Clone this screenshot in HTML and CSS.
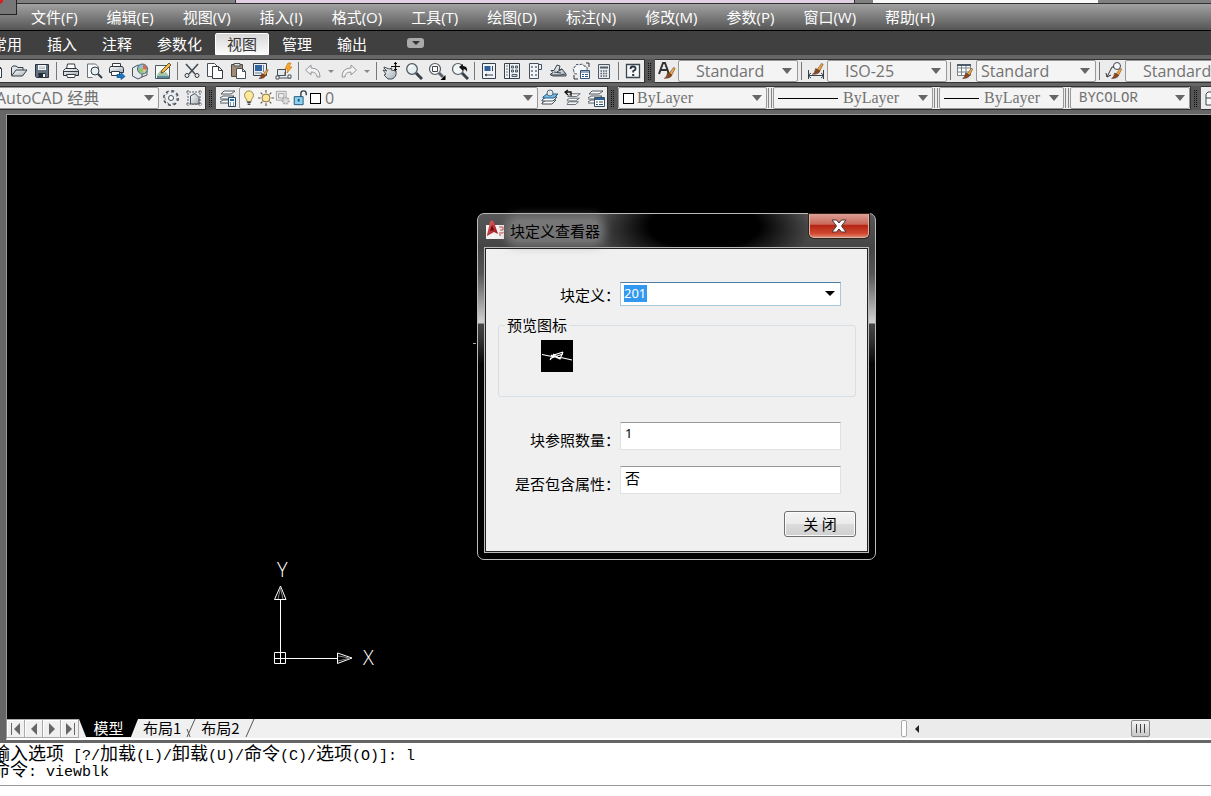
FILE: index.html
```html
<!DOCTYPE html>
<html lang="zh-CN">
<head>
<meta charset="utf-8">
<title>AutoCAD 经典</title>
<link rel="stylesheet" href="styles.css">
</head>
<body>
<svg class="sprite" aria-hidden="true">
  <defs>
    <linearGradient id="g-metal" x1="0" y1="0" x2="1" y2="1"><stop offset="0" stop-color="#fff"/><stop offset="1" stop-color="#a4adb5"/></linearGradient>
    <linearGradient id="g-red" x1="0" y1="0" x2="1" y2="1"><stop offset="0" stop-color="#f26a66"/><stop offset="1" stop-color="#8e0a10"/></linearGradient>
  </defs>
  <symbol id="i-new" viewBox="0 0 18 18"><path d="M3.500 2.500h7l4 4v9h-11z M10.500 2.500v4h4" fill="#fff" stroke="#333b45"/></symbol>
  <symbol id="i-open" viewBox="0 0 18 18"><path d="M1.500 13V5.500L3 4h3l2 1.500h5V8" fill="#dfe4e8" stroke="#333b45"/><path d="M1.500 14L6 8h11l-4.500 6z" fill="url(#g-metal)" stroke="#333b45"/></symbol>
  <symbol id="i-save" viewBox="0 0 18 18"><path d="M2.500 2.500h13v13h-12l-1-1z" fill="#637080" stroke="#2b333d"/><path d="M5 3h8v5H5z" fill="#f4f6f8"/><path d="M5.500 11h7v4h-7z" fill="#222a33"/><path d="M10 12h2v3h-2z" fill="#eee"/><path d="M6 5h6M6 6.500h6" stroke="#98a3ad" stroke-width=".7"/></symbol>
  <symbol id="i-print" viewBox="0 0 18 18"><path d="M4.500 7l1-5h7l1 5" fill="#fff" stroke="#333b45"/><path d="M3.500 6.500h11l2 2v5h-15v-5z" fill="url(#g-metal)" stroke="#2c343e"/><path d="M1.500 9.500h15" stroke="#333b45"/><path d="M4.500 12.500h9l-1 3h-7z" fill="#fff" stroke="#333b45"/></symbol>
  <symbol id="i-preview" viewBox="0 0 18 18"><path d="M13.500 7V5l-3-3h-8v13.500h5" fill="#fafafa" stroke="#6a737d"/><circle cx="10" cy="9" r="4" fill="#e7f0f5" stroke="#333b45"/><path d="M13 12l4 4" stroke="#333b45" stroke-width="2"/></symbol>
  <symbol id="i-publish" viewBox="0 0 18 18"><path d="M4.500 4V1.500h8V4" fill="#fff" stroke="#333b45"/><path d="M2.500 4.500h12l1 2v4h-14v-4z" fill="url(#g-metal)" stroke="#2c343e"/><path d="M3.500 9.500h8v4h-8z" fill="#fff" stroke="#333b45"/><path d="M9 12.500h4v-2l4 4-4 3v-2H9z" fill="#1878c8" stroke="#064986" stroke-width=".7"/></symbol>
  <symbol id="i-model" viewBox="0 0 18 18"><path d="M1.500 6L7 3l4 2v10l-4 2-5.500-3z" fill="#e5e9ed" stroke="#47515c"/><path d="M11 15l5-2V9" fill="none" stroke="#47515c"/><circle cx="11.500" cy="7" r="5" fill="#8dc3d8" stroke="#49636f"/><path d="M12 2.500q4 1 4 4.500l-4 1z" fill="#dd674b"/><path d="M8 6l4 1-1 5q-4-1-3-6z" fill="#9bc05a"/><path d="M12 7l3 1-2 3z" fill="#f1d357"/></symbol>
  <symbol id="i-sheet" viewBox="0 0 18 18"><path d="M1.500 3.500h14v13h-14z" fill="#f6faf7" stroke="#4c5963"/><path d="M3 13l4-5 3 3 2-1 3 4v2H3z" fill="#a2c7a8"/><path d="M3 15h12" stroke="#5a8a99" stroke-width="2"/><path d="M7 11l1-3 7-7 2 2-7 7z" fill="#f0bd4d" stroke="#765427"/></symbol>
  <symbol id="i-cut" viewBox="0 0 18 18"><path d="M3 2l9 10M15 2L6 12" stroke="#444c55" stroke-width="1.600"/><circle cx="4" cy="13.500" r="2" fill="#eee" stroke="#2b333c"/><circle cx="14" cy="13.500" r="2" fill="#eee" stroke="#2b333c"/></symbol>
  <symbol id="i-copy" viewBox="0 0 18 18"><path d="M7 14.500H1.500v-13h7L11 4" fill="#fff" stroke="#46505b"/><path d="M6.500 4.500h6l4 4v8h-10z M12.500 4.500v4h4" fill="#fff" stroke="#333b45"/></symbol>
  <symbol id="i-paste" viewBox="0 0 18 18"><path d="M2.500 2.500h11v12h-11z" fill="#a08c72" stroke="#4d4840"/><path d="M5 1.500h6V4H5z" fill="#dde1e4" stroke="#555"/><path d="M7.500 6.500h6l3 3v7h-9z M13.500 6.500v3h3" fill="#fff" stroke="#46505b"/></symbol>
  <symbol id="i-brush" viewBox="0 0 18 18"><path d="M10 10l5-7 2 1-4 8z" fill="#f0a642" stroke="#6b4522" stroke-width=".7"/><path d="M8 9l5 3q-1 4-9 4 3-1 4-7z" fill="#8c4722" stroke="#4c2612" stroke-width=".7"/></symbol>
  <symbol id="i-match" viewBox="0 0 18 18"><path d="M1.500 1.500h13v12h-13z" fill="#e8eef3" stroke="#35414e"/><path d="M3 3h7v6H3z" fill="#31659f"/><path d="M11.500 3v7M3 11h7" stroke="#73808d"/><use href="#i-brush" x="3" y="5" width="15" height="13"/></symbol>
  <symbol id="i-block" viewBox="0 0 18 18"><path d="M2.500 7.500h8v6h-8z" fill="#e6e9ec" stroke="#46505b"/><path d="M1 16h15M10 13v-3" stroke="#46505b"/><path d="M1 14h3v3H1zM13 13h3v3h-3z" fill="#fff" stroke="#46505b"/><path d="M13 1l-3 6h3l-1 4 5-6h-3l2-4z" fill="#ffad20" stroke="#bd6a0c" stroke-width=".6"/></symbol>
  <symbol id="i-undo" viewBox="0 0 18 18"><path d="M1.500 8L7 3v3q9 0 9 9h-3q0-5-6-5v3z" fill="#f2f2f2" stroke="#93979b"/></symbol>
  <symbol id="i-redo" viewBox="0 0 18 18"><path d="M16.500 8L11 3v3q-9 0-9 9h3q0-5 6-5v3z" fill="#f2f2f2" stroke="#93979b"/></symbol>
  <symbol id="i-pan" viewBox="0 0 18 18"><path d="M2 5l5 2 3-1-1 2 5 1q1 6-4 8H6l-4-4 2-1-3-4 4 1-3-3z" fill="url(#g-metal)" stroke="#434c55"/><path d="M13.500 0v9M9 4.500h9M12 1.500h3M12 7.500h3" stroke="#111" stroke-width="1.200"/></symbol>
  <symbol id="i-zoom" viewBox="0 0 18 18"><path d="M11 11l6 6" stroke="#3a4148" stroke-width="3"/><circle cx="7" cy="7" r="5.300" fill="#e5f0f2" stroke="#515a62" stroke-width="1.300"/><path d="M4 6q1-3 4-2" stroke="#fff" stroke-width="1.500" fill="none"/></symbol>
  <symbol id="i-zoomwin" viewBox="0 0 18 18"><path d="M11 11l4 4" stroke="#59616a" stroke-width="3"/><circle cx="7" cy="7" r="5.500" fill="#f4f8f9" stroke="#515a62" stroke-width="1.200"/><path d="M4.500 4.500h5v5h-5z" fill="#fff" stroke="#444"/><path d="M17.500 13v5h-5z" fill="#000"/></symbol>
  <symbol id="i-zoomprev" viewBox="0 0 18 18"><path d="M11 11l6 6" stroke="#3a4148" stroke-width="3"/><circle cx="7" cy="7" r="5.500" fill="#f1f6f7" stroke="#515a62" stroke-width="1.200"/><path d="M8 5l4-3v2q5 0 4 6-1-3-4-3v2z" fill="#111"/></symbol>
  <symbol id="i-props" viewBox="0 0 18 18"><path d="M2.500 1.500h13v15h-13z" fill="#f1f4f6" stroke="#36414c"/><path d="M4.500 4h6v5h-6z" fill="#315f9e"/><path d="M12.500 4v5M5 13h8M5 13l2-1M5 13l2 1" stroke="#36414c"/></symbol>
  <symbol id="i-center" viewBox="0 0 18 18"><path d="M1.500 1.500h15v15h-15zM6.500 2v14" fill="#f1f4f6" stroke="#36414c"/><path d="M3 4h2M3 7h2M3 10h2M3 13h2" stroke="#687580"/><path d="M8.500 4h2v2h-2zM12.500 4h2v2h-2zM8.500 8h2v2h-2zM12.500 8h2v2h-2zM9 12.500h5v2H9z" fill="#cfd8df" stroke="#4d5a66"/></symbol>
  <symbol id="i-palette" viewBox="0 0 18 18"><path d="M3.500 1.500h9v15h-9zM12.500 2.500h3v5h-3" fill="#f1f4f6" stroke="#47525d"/><path d="M5 4h2v2H5zM9 4h2v2H9zM5 8h2v2H5zM9 8h2v2H9zM5 12h2v2H5zM9 12h2v2H9z" fill="#84909a"/></symbol>
  <symbol id="i-sheetset" viewBox="0 0 18 18"><path d="M1 12.500l3-2-2-2h3L8 3l3 1-1 4 3-1 4 5v2H4z" fill="url(#g-metal)" stroke="#39444e"/><path d="M2 13h10l4-1M8 10l5-3M5 10l7 1" stroke="#39444e" fill="none"/></symbol>
  <symbol id="i-markup" viewBox="0 0 18 18"><path d="M5 12q-4 0-3-3-2-3 1-4 1-4 4-2 4-2 5 1 4 0 3 4" fill="#f4f6f7" stroke="#47525d" stroke-dasharray="3 1"/><path d="M2 13v4h4M14 1h3v4" fill="none" stroke="#333"/><path d="M8.500 8.500h9v8h-9z" fill="#fff" stroke="#32547b"/><path d="M9 10h8M10 12.500h2M13 12.500h3M10 14.500h2M13 14.500h3" stroke="#32547b"/></symbol>
  <symbol id="i-calc" viewBox="0 0 18 18"><path d="M3.500 2.500h11v14h-11z" fill="#e7ebee" stroke="#4e5963"/><path d="M5 4.500h8v2H5z" fill="#505b66"/><path d="M5.500 9h7M5.500 11.500h7M5.500 14h7" stroke="#55606b" stroke-width="1.500" stroke-dasharray="1.500 1"/></symbol>
  <symbol id="i-help" viewBox="0 0 18 18"><path d="M2.500 2.500h13v13h-13z" fill="#f8f8f8" stroke="#384552" stroke-width="1.300"/><path d="M6.500 7q0-2.500 2.500-2.500 3 0 2.500 2.500-.2 1.200-2.300 2v1.500" fill="none" stroke="#253340" stroke-width="1.800"/><path d="M8.200 12h2v2h-2z" fill="#253340"/></symbol>
  <symbol id="i-textstyle" viewBox="0 0 18 18"><path d="M1 12L5 1h2l4 11M3 8h7" fill="none" stroke="#333" stroke-width="2"/><use href="#i-brush" x="2" y="3" width="17" height="15"/></symbol>
  <symbol id="i-dimstyle" viewBox="0 0 18 18"><path d="M1.500 8v9M16.500 8v9M2 13.500h14M4 11l-3 2.500L4 16M14 11l3 2.500-3 2.500" fill="none" stroke="#36414c"/><use href="#i-brush" x="1" y="-1" width="17" height="15"/></symbol>
  <symbol id="i-tablestyle" viewBox="0 0 18 18"><path d="M1.500 2.500h13v11h-13zM2 6h12M2 10h12M5.500 3v10M10 3v10" fill="#fff" stroke="#76808a"/><path d="M1 2h14v2H1z" fill="#4e5b68"/><use href="#i-brush" x="3" y="4" width="15" height="14"/></symbol>
  <symbol id="i-leader" viewBox="0 0 18 18"><circle cx="12" cy="4" r="3.500" fill="#f5f7f8" stroke="#3f4a55"/><path d="M9 5H7L2 15M1 11l1 4 4-2" fill="none" stroke="#333"/><use href="#i-brush" x="3" y="4" width="15" height="14"/></symbol>
  <symbol id="i-gear" viewBox="0 0 18 18"><circle cx="9" cy="9" r="7" fill="none" stroke="#444e58" stroke-width="2" stroke-dasharray="3 2.500"/><circle cx="9" cy="9" r="6.500" fill="#eceff1"/><circle cx="9" cy="9" r="6" fill="none" stroke="#68727b" stroke-dasharray="2.500 3"/><circle cx="9" cy="9" r="2.500" fill="#fff" stroke="#444e58"/></symbol>
  <symbol id="i-workspace" viewBox="0 0 18 18"><path d="M3 1v16M15 1v16M1 3h16M1 15h16" stroke="#58636e" stroke-dasharray="2 1"/><path d="M5.500 15V7L10 4.500l4 4V15z" fill="url(#g-metal)" stroke="#44505b"/></symbol>
  <symbol id="i-layers" viewBox="0 0 18 18"><path d="M2 5l3-3h11l-4 3zM1 9l3-2h11l-4 3H1M1 13l3-2h10l-3 3H1" fill="#fafafa" stroke="#505a64"/></symbol>
  <symbol id="i-layerprops" viewBox="0 0 18 18"><use href="#i-layers" width="18" height="18"/><path d="M9.500 8.500h7v9h-7z" fill="#f4f8fc" stroke="#23435f"/><path d="M11 10h4v2h-4z" fill="#2670aa"/><path d="M11 14h1M14 14h1M11 16h1M14 16h1" stroke="#23435f"/></symbol>
  <symbol id="i-layercur" viewBox="0 0 18 18"><path d="M1 14l4-3h10l-4 4H1z" fill="#fff" stroke="#3c4c58"/><path d="M1 11l4-3h11l-4 4H1z" fill="#fff" stroke="#3c4c58"/><path d="M2 8l4-3h11l-4 4H2z" fill="#79bbe6" stroke="#1c5c90"/><circle cx="9" cy="4" r="3" fill="#e4ebee" stroke="#566a78"/></symbol>
  <symbol id="i-layerprev" viewBox="0 0 18 18"><use href="#i-layers" x="2" y="3" width="16" height="16"/><path d="M1 3h6v4M4 1L1 3l3 3" fill="none" stroke="#111" stroke-width="1.300"/></symbol>
  <symbol id="i-layerstate" viewBox="0 0 18 18"><use href="#i-layers" width="18" height="18"/><path d="M7.500 8.500h10v9h-10z" fill="#fff" stroke="#344f68"/><path d="M8 10h9" stroke="#2f6292" stroke-width="2"/><path d="M9 13h2M12 13h4M9 15.500h2M12 15.500h4" stroke="#344f68"/></symbol>
  <symbol id="i-bulb" viewBox="0 0 18 18"><path d="M6.500 11Q4 8.500 4 6a5 5 0 0 1 10 0q0 2.500-2.500 5v2h-5z" fill="#ffe89a" stroke="#8c7840"/><path d="M7 14h4M7.500 16h3" stroke="#3e4a55" stroke-width="1.500"/></symbol>
  <symbol id="i-sun" viewBox="0 0 18 18"><path d="M9 0v3M9 15v3M0 9h3M15 9h3M3 3l2 2M13 13l2 2M3 15l2-2M13 5l2-2" stroke="#665630" stroke-width="1.300"/><circle cx="9" cy="9" r="4.500" fill="#ffe799" stroke="#77683c"/></symbol>
  <symbol id="i-vpfreeze" viewBox="0 0 18 18"><path d="M1.500 1.500h11v10h-11zM4 4h6v5H4z" fill="#eee" stroke="#999"/><circle cx="12" cy="12" r="3.500" fill="#ddd" stroke="#aaa" stroke-width="2" stroke-dasharray="2 1"/></symbol>
  <symbol id="i-unlock" viewBox="0 0 18 18"><path d="M10 8V4q0-3 3-3t3 3v2" fill="none" stroke="#32424f" stroke-width="1.600"/><path d="M2.500 7.500h10v9h-10z" fill="#8ed2f2" stroke="#144b6b"/><path d="M7.500 10v3" stroke="#144b6b" stroke-width="2"/></symbol>
  <symbol id="i-grid" viewBox="0 0 18 18"><path d="M4 3h12v13H2V5zM2 9h14M8 3v13" fill="#f8fafb" stroke="#3a4650"/></symbol>
</svg>

<div class="app">
  <div class="titlestrip" aria-hidden="true"><span class="logo-corner"><svg width="16" height="14" viewBox="0 0 16 14"><path d="M0 0h3v2L0 4z" fill="#d81c20"/></svg></span><span class="strip-pink"></span><span class="strip-white"></span></div>

  <nav class="menubar" aria-label="菜单">
    <button>文件(F)</button><button>编辑(E)</button><button>视图(V)</button><button>插入(I)</button><button>格式(O)</button><button>工具(T)</button><button>绘图(D)</button><button>标注(N)</button><button>修改(M)</button><button>参数(P)</button><button>窗口(W)</button><button>帮助(H)</button>
  </nav>

  <nav class="ribbon" aria-label="功能区">
    <button>常用</button><button>插入</button><button>注释</button><button>参数化</button><button class="current">视图</button><button>管理</button><button>输出</button>
    <button class="ribbon-more" aria-label="更多"><span class="tri"></span></button>
  </nav>

  <div class="toolbars">
    <div class="toolrow">
      <div class="bar bar-standard">
        <button class="tool" aria-label="新建"><svg><use href="#i-new"/></svg></button>
        <button class="tool" aria-label="打开"><svg><use href="#i-open"/></svg></button>
        <button class="tool" aria-label="保存"><svg><use href="#i-save"/></svg></button>
        <i class="sep"></i>
        <button class="tool" aria-label="打印"><svg><use href="#i-print"/></svg></button>
        <button class="tool" aria-label="打印预览"><svg><use href="#i-preview"/></svg></button>
        <button class="tool" aria-label="发布"><svg><use href="#i-publish"/></svg></button>
        <button class="tool" aria-label="三维"><svg><use href="#i-model"/></svg></button>
        <button class="tool" aria-label="图纸"><svg><use href="#i-sheet"/></svg></button>
        <i class="sep"></i>
        <button class="tool" aria-label="剪切"><svg><use href="#i-cut"/></svg></button>
        <button class="tool" aria-label="复制"><svg><use href="#i-copy"/></svg></button>
        <button class="tool" aria-label="粘贴"><svg><use href="#i-paste"/></svg></button>
        <button class="tool" aria-label="特性匹配"><svg><use href="#i-match"/></svg></button>
        <button class="tool" aria-label="块编辑器"><svg><use href="#i-block"/></svg></button>
        <i class="sep"></i>
        <button class="tool" aria-label="放弃"><svg><use href="#i-undo"/></svg></button>
        <button class="tool drop" aria-label="放弃列表"><span class="tri"></span></button>
        <button class="tool" aria-label="重做"><svg><use href="#i-redo"/></svg></button>
        <button class="tool drop" aria-label="重做列表"><span class="tri"></span></button>
        <i class="sep"></i>
        <button class="tool" aria-label="平移"><svg><use href="#i-pan"/></svg></button>
        <button class="tool" aria-label="缩放"><svg><use href="#i-zoom"/></svg></button>
        <button class="tool" aria-label="窗口缩放"><svg><use href="#i-zoomwin"/></svg></button>
        <button class="tool" aria-label="上一个缩放"><svg><use href="#i-zoomprev"/></svg></button>
        <i class="sep"></i>
        <button class="tool" aria-label="特性"><svg><use href="#i-props"/></svg></button>
        <button class="tool" aria-label="设计中心"><svg><use href="#i-center"/></svg></button>
        <button class="tool" aria-label="工具选项板"><svg><use href="#i-palette"/></svg></button>
        <button class="tool" aria-label="图纸集"><svg><use href="#i-sheetset"/></svg></button>
        <button class="tool" aria-label="标记集"><svg><use href="#i-markup"/></svg></button>
        <button class="tool" aria-label="计算器"><svg><use href="#i-calc"/></svg></button>
        <i class="sep"></i>
        <button class="tool" aria-label="帮助"><svg><use href="#i-help"/></svg></button>
      </div>
      <span class="grip"></span>
      <div class="bar bar-fill">
        <button class="tool" aria-label="文字样式"><svg><use href="#i-textstyle"/></svg></button>
        <div class="combo style-combo indent"><select aria-label="文字样式"><option>Standard</option></select></div>
        <i class="sep"></i>
        <button class="tool" aria-label="标注样式"><svg><use href="#i-dimstyle"/></svg></button>
        <div class="combo style-combo indent"><select aria-label="标注样式"><option>ISO-25</option></select></div>
        <i class="sep"></i>
        <button class="tool" aria-label="表格样式"><svg><use href="#i-tablestyle"/></svg></button>
        <div class="combo style-combo"><select aria-label="表格样式"><option>Standard</option></select></div>
        <i class="sep"></i>
        <button class="tool" aria-label="多重引线样式"><svg><use href="#i-leader"/></svg></button>
        <div class="combo style-combo indent"><select aria-label="多重引线样式"><option>Standard</option></select></div>
      </div>
    </div>

    <div class="toolrow">
      <div class="bar bar-workspace">
        <div class="combo workspace-combo"><select aria-label="工作空间"><option>AutoCAD 经典</option></select></div>
        <button class="tool" aria-label="工作空间设置"><svg><use href="#i-gear"/></svg></button>
        <button class="tool" aria-label="我的工作空间"><svg><use href="#i-workspace"/></svg></button>
      </div>
      <span class="grip"></span>
      <div class="bar">
        <button class="tool" aria-label="图层特性"><svg><use href="#i-layerprops"/></svg></button>
        <div class="combo layer-combo">
          <svg><use href="#i-bulb"/></svg><svg><use href="#i-sun"/></svg><svg><use href="#i-vpfreeze"/></svg><svg><use href="#i-unlock"/></svg><span class="swatch"></span>
          <select aria-label="图层"><option>0</option></select>
        </div>
        <button class="tool" aria-label="置为当前"><svg><use href="#i-layercur"/></svg></button>
        <button class="tool" aria-label="上一个图层"><svg><use href="#i-layerprev"/></svg></button>
        <button class="tool" aria-label="图层状态"><svg><use href="#i-layerstate"/></svg></button>
      </div>
      <span class="grip"></span>
      <div class="bar">
        <div class="combo serif color-combo"><span class="swatch"></span><select aria-label="颜色"><option>ByLayer</option></select></div>
        <i class="sep double"></i>
        <div class="combo serif type-combo"><span class="line long"></span><select aria-label="线型"><option>ByLayer</option></select></div>
        <i class="sep double"></i>
        <div class="combo serif weight-combo"><span class="line"></span><select aria-label="线宽"><option>ByLayer</option></select></div>
        <i class="sep double"></i>
        <div class="combo mono plot-combo"><select aria-label="打印样式"><option>BYCOLOR</option></select></div>
      </div>
      <span class="grip"></span>
      <div class="bar bar-fill"><button class="tool" aria-label="视口"><svg><use href="#i-grid"/></svg></button></div>
    </div>
  </div>

  <main class="drawing">
    <svg class="ucs" width="106" height="110" viewBox="0 0 106 110" role="img" aria-label="UCS">
      <g fill="none" stroke="#fff">
        <path d="M4.500 92.500h11v11h-11zM10.500 39v65M4 98.500h63"/>
        <path d="M4.500 39.500L10.500 26l5.500 13.500zM67.500 93L82 98l-14.500 5.500z"/>
        <path d="M10.500 28L8 39M10.500 28L13 39M80 98l-12-2M80 98l-12 3" stroke="#888"/>
      </g>
      <text x="7" y="17">Y</text><text x="93" y="105">X</text>
    </svg>
    <span class="speck"></span>

    <section class="dialog" role="dialog" aria-labelledby="dlg-title">
      <header class="dialog-head">
        <svg class="dialog-icon" width="20" height="20" viewBox="0 0 20 20"><path d="M1 5h18v14H1z" fill="#f4f1f1"/><path d="M2 15L5 2q2-3 4 0l4 12-4-2-7 4z" fill="url(#g-red)"/><path d="M5 11l2-6 2 5z" fill="#6a080d"/><path d="M14 7h4v3h-3M14 13h4v-1M15 14v2" stroke="#c44" fill="none"/></svg>
        <h1 id="dlg-title">块定义查看器</h1>
        <button class="dialog-close" aria-label="关闭窗口"><svg width="16" height="14" viewBox="0 0 16 14"><path d="M1 1h4.500L8 4l2.500-3H15l-4.500 6 4.500 6h-4.500L8 10l-2.500 3H1l4.500-6z" fill="#fff" stroke="#4b3436"/></svg></button>
      </header>
      <form class="dialog-body">
        <div class="field first">
          <label for="blk">块定义：</label>
          <div class="blockbox"><input id="blk" value="201"><button type="button" aria-label="展开"><span class="tri"></span></button></div>
        </div>
        <fieldset>
          <legend>预览图标</legend>
          <svg width="32" height="32" viewBox="0 0 32 32"><path d="M0 0h32v32H0z" fill="#000"/><path d="M1 14.500l10 2 9 1 11 2.500M9 20l4-5 9-3M22 12l-3 7-9-4M9 18.500l6-2M10 18l12-4M12 14l7 5" fill="none" stroke="#fff" stroke-width="1.200"/></svg>
        </fieldset>
        <div class="field"><label for="cnt">块参照数量：</label><input id="cnt" class="box" value="1"></div>
        <div class="field"><label for="att">是否包含属性：</label><input id="att" class="box cjk" value="否"></div>
        <div class="actions"><button type="button">关 闭</button></div>
      </form>
    </section>
  </main>

  <div class="layoutbar">
    <div class="navs">
      <button aria-label="第一个"><svg width="12" height="12" viewBox="0 0 12 12"><path d="M1.500 0v12" stroke="#666"/><path d="M10 0v12L4 6z" fill="#666"/></svg></button>
      <button aria-label="上一个"><svg width="12" height="12" viewBox="0 0 12 12"><path d="M9 0v12L3 6z" fill="#666"/></svg></button>
      <button aria-label="下一个"><svg width="12" height="12" viewBox="0 0 12 12"><path d="M3 0v12l6-6z" fill="#666"/></svg></button>
      <button aria-label="最后一个"><svg width="12" height="12" viewBox="0 0 12 12"><path d="M10.500 0v12" stroke="#666"/><path d="M2 0v12l6-6z" fill="#666"/></svg></button>
    </div>
    <button class="sheet model">模型</button>
    <button class="sheet">布局1</button>
    <svg class="slash" width="10" height="18" viewBox="0 0 10 18"><path d="M1 18L9 0M1 10l3 8" fill="none" stroke="#555"/></svg>
    <button class="sheet">布局2</button>
    <svg class="slash" width="10" height="18" viewBox="0 0 10 18"><path d="M1 18L9 0" stroke="#555"/></svg>
    <div class="scroll">
      <span class="splitter"></span>
      <button class="scroll-left" aria-label="向左滚动"><svg width="6" height="8" viewBox="0 0 6 8"><path d="M5 0v8L1 4z" fill="#222"/></svg></button>
      <span class="thumb"></span>
    </div>
  </div>

  <section class="command">
    <div class="history">
      <p><b>输入选项</b> [?/<b>加载</b>(L)/<b>卸载</b>(U)/<b>命令</b>(C)/<b>选项</b>(O)]: l</p>
      <p><b>命令</b>: viewblk</p>
    </div>
    <input class="prompt" aria-label="命令行">
  </section>
</div>
</body>
</html>
```
FILE: styles.css
```css
* { box-sizing: border-box; }
body { margin: 0; background: #fff; font: 15px/20px "Open Sans", "Noto Sans CJK SC", sans-serif; }
button, input, select { font: inherit; color: inherit; margin: 0; padding: 0; border: 0; background: none; border-radius: 0; outline: 0; }
.sprite { position: absolute; width: 0; height: 0; }
.app { display: flex; flex-direction: column; height: 100vh; overflow: hidden; background: #666; }

.titlestrip { flex: none; display: flex; height: 4px; background: #808082; border-bottom: 1px solid #303030; }
.logo-corner { flex: none; width: 17px; height: 15px; background: #777; border: solid #222; border-width: 0 1px 1px 0; z-index: 1; display: flex; }
.strip-pink { flex: none; width: 620px; margin-left: 218px; background: #e3cfe4; border: solid #333; border-width: 0 1px; }
.strip-white { flex: none; width: 225px; margin-left: 18px; background: #f8f8f8; }

.menubar { flex: none; display: flex; gap: 29px; height: 27px; padding-left: 31px; color: #fff; background: linear-gradient(#a2a2a2, #555); border-bottom: 1px solid #000; white-space: nowrap; }
.ribbon { flex: none; display: flex; height: 24px; padding-left: 35px; background: #404040; color: #fff; align-items: flex-end; white-space: nowrap; }
.ribbon button { height: 22px; padding: 0 12px; margin-right: 1px; line-height: 22px; }
.ribbon button:first-child { margin-left: -55px; }
.ribbon .current { background: linear-gradient(#d8d8d8, #fafafa); color: #333; border: 1px solid #fff; padding: 0 11px; border-radius: 2px 2px 0 0; line-height: 20px; }
.ribbon .ribbon-more { align-self: center; display: flex; align-items: center; justify-content: center; width: 17px; height: 10px; padding: 0; margin-left: 27px; background: #aaa; border-radius: 3px; }
.tri { width: 0; height: 0; border: solid transparent; border-width: 4px 4px 0; border-top-color: #333; }

.toolbars { flex: none; display: flex; flex-direction: column; gap: 3px; padding: 4px 0; overflow: hidden; }
.toolrow { display: flex; height: 24px; }
.bar { flex: none; display: flex; align-items: center; background: #ececec; border: solid #333; border-width: 1px 1px 1px 0; overflow: hidden; }
.bar-fill { flex: 1 1 0; border-right: 0; }
.bar-standard { margin-left: -16px; }
.tool { flex: none; display: flex; align-items: center; justify-content: center; width: 23px; height: 22px; }
.tool svg { width: 18px; height: 18px; }
.tool.drop { width: 13px; }
.tool.drop .tri { border-width: 3px 3px 0; border-top-color: #888; }
.sep { flex: none; width: 6px; height: 18px; background: linear-gradient(#777, #777) center / 1px 100% no-repeat; }
.sep.double { background: none; width: 4px; height: 20px; border: solid #888; border-width: 0 1px; margin: 0 1px; }
.grip { flex: none; width: 10px; background: repeating-linear-gradient(#555 0 1px, transparent 1px 2px), repeating-linear-gradient(90deg, #111 0 1px, #555 1px 2px); border: solid #555; border-width: 3px; }
.combo { flex: none; display: flex; align-items: center; height: 22px; padding: 0 4px; background: #f4f4f4; border: 1px solid #999; border-radius: 2px; color: #727272; }
.combo select { flex: 1; min-width: 0; appearance: none; height: 20px; line-height: 20px; }
.combo::after { content: ""; border: solid transparent; border-width: 6px 5px 0; border-top-color: #666; }
.style-combo { width: 120px; font-size: 16px; padding-right: 5px; }
.indent { padding-left: 17px; }
.workspace-combo { width: 165px; margin-left: -6px; padding-left: 1px; font-size: 16px; }
.layer-combo { width: 299px; padding-left: 1px; font-size: 16px; }
.layer-combo svg { width: 16px; height: 16px; margin-right: 1px; }
.swatch { flex: none; width: 11px; height: 11px; border: 1px solid #000; background: #fff; margin: 0 4px 0 1px; }
.color-combo { width: 149px; }
.color-combo .swatch { margin: 0 3px 0 0; }
.type-combo { width: 160px; }
.weight-combo { width: 125px; }
.plot-combo { width: 120px; padding-left: 8px; }
.line { flex: none; width: 35px; height: 1px; background: #000; margin-right: 5px; }
.line.long { width: 60px; }
.serif { font-family: "Liberation Serif", serif; font-size: 16px; }
.mono { font-family: "Liberation Mono", monospace; font-size: 14px; }

.drawing { flex: 1; min-height: 0; position: relative; background: #000; border: solid #999; border-width: 1px 0 0 1px; margin-left: 6px; overflow: hidden; }
.ucs { position: absolute; left: 263px; top: 445px; }
.ucs text { font: 300 20px/20px "Open Sans", sans-serif; fill: #fff; }
.speck { position: absolute; left: 466px; top: 228px; width: 3px; height: 1px; background: #aaa; }

.dialog { position: absolute; left: 470px; top: 98px; width: 399px; padding: 0 6px 6px; border: 1px solid #bbb; border-radius: 7px;
  background: radial-gradient(ellipse 110px 46px at 57% 12px, #000 50%, transparent) 0 0 / 100% 33px no-repeat, linear-gradient(#595759 0, #444 34px, #555 60px, #ccc 106px, #d0d0d0 109px, #444 110px, #333 125px, #050505 150px, #000); }
.dialog-head { display: flex; height: 33px; padding-left: 1px; }
.dialog-icon { flex: none; margin: 6px 5px 0 0; }
.dialog h1 { margin: 6px 0 0; font: 15px/22px "Noto Sans CJK SC", sans-serif; color: #000; height: 22px; background: rgba(150, 150, 150, .55); box-shadow: 0 0 8px 5px rgba(150, 150, 150, .55); border-radius: 8px; }
.dialog-close { display: flex; align-items: center; justify-content: center; width: 60px; height: 24px; margin-left: auto; border: 1px solid #d9b5b0; border-top-width: 0; border-radius: 0 0 5px 5px; background: linear-gradient(#dca096, #c96658 45%, #b32312 48%, #d24831 85%, #e08468); box-shadow: 0 0 0 1px #321; }
.dialog-body { border: 1px solid #bbb; outline: 1px solid #222; outline-offset: -2px; background: #f0f0f0; padding: 34px 12px 15px 13px; color: #000; font-family: "Noto Sans CJK SC", sans-serif; }
.field { display: grid; grid-template-columns: 122px 221px; margin-bottom: 16px; }
.field label { text-align: right; line-height: 36px; height: 28px; white-space: nowrap; }
.first { margin-bottom: 9px; }
.first label { height: 24px; line-height: 26px; }
.blockbox { display: flex; align-items: center; justify-content: space-between; height: 24px; padding: 0 5px 2px 3px; background: #fff; border: 1px solid #a9c7dd; border-top-color: #4d7ea8; }
.blockbox input { width: 23px; height: 17px; background: #3399f0; color: #fff; font: 13px/17px "Noto Sans", sans-serif; }
.blockbox .tri { display: block; border-width: 5px 5px 0; border-top-color: #000; }
fieldset { height: 82px; margin: 0 0 25px; padding: 0 0 0 42px; border: 1px solid #d5dfe5; border-radius: 3px; }
legend { margin-left: -36px; padding: 0 2px; line-height: 20px; }
fieldset svg { display: block; margin-top: 5px; }
.box { height: 28px; padding: 0 4px 6px; background: #fff; border: 1px solid #dde2e6; border-top-color: #999; font: 13px/20px "Noto Sans", sans-serif; }
.box.cjk { font: 15px/20px "Noto Sans CJK SC", sans-serif; }
.actions { display: flex; justify-content: flex-end; margin-top: 17px; }
.actions button { width: 72px; height: 26px; border: 1px solid #707070; border-radius: 3px; background: linear-gradient(#f3f3f3, #ebebeb 49%, #dcdcdc 50%, #cfcfcf); box-shadow: inset 0 0 0 1px #fafafa; }

.layoutbar { flex: none; display: flex; height: 21px; margin: 0 0 3px 6px; background: #f0f0f0; border-left: 1px solid #999; border-bottom: 2px solid #fff; color: #000; }
.navs { display: flex; }
.navs button { display: flex; align-items: center; justify-content: center; width: 18px; border: solid #aaa; border-width: 1px 1px 1px 0; box-shadow: inset 1px 1px #fff; }
.sheet { height: 18px; padding: 0 5px; line-height: 18px; font-family: "Noto Sans CJK SC", sans-serif; }
.model { width: 59px; background: #000; color: #fff; clip-path: polygon(0 0, 100% 0, 88% 100%, 12% 100%); }
.slash { flex: none; }
.scroll { display: flex; width: 310px; margin-left: auto; align-items: center; background: #ebebeb; }
.splitter { width: 6px; height: 17px; border: 1px solid #aaa; background: #fff; border-radius: 2px; }
.scroll-left { display: flex; width: 20px; height: 17px; align-items: center; justify-content: center; }
.thumb { width: 19px; height: 17px; margin-left: 204px; border: 1px solid #888; border-radius: 2px; background: repeating-linear-gradient(90deg, #444 0 1px, transparent 1px 4px) 4px 3px / 9px 9px no-repeat, linear-gradient(#f4f4f4, #c8c8c8); }

.command { flex: none; background: #fff; color: #000; }
.history { height: 43px; padding-top: 1px; margin-left: -8px; border-bottom: 1px solid #999; font: 15px/16px "Liberation Mono", monospace; }
.history p { margin: 0; height: 16px; white-space: pre; }
.history b { font: 18px/16px "Noto Sans CJK SC", sans-serif; }
.prompt { display: block; width: 100%; height: 10px; }
```
